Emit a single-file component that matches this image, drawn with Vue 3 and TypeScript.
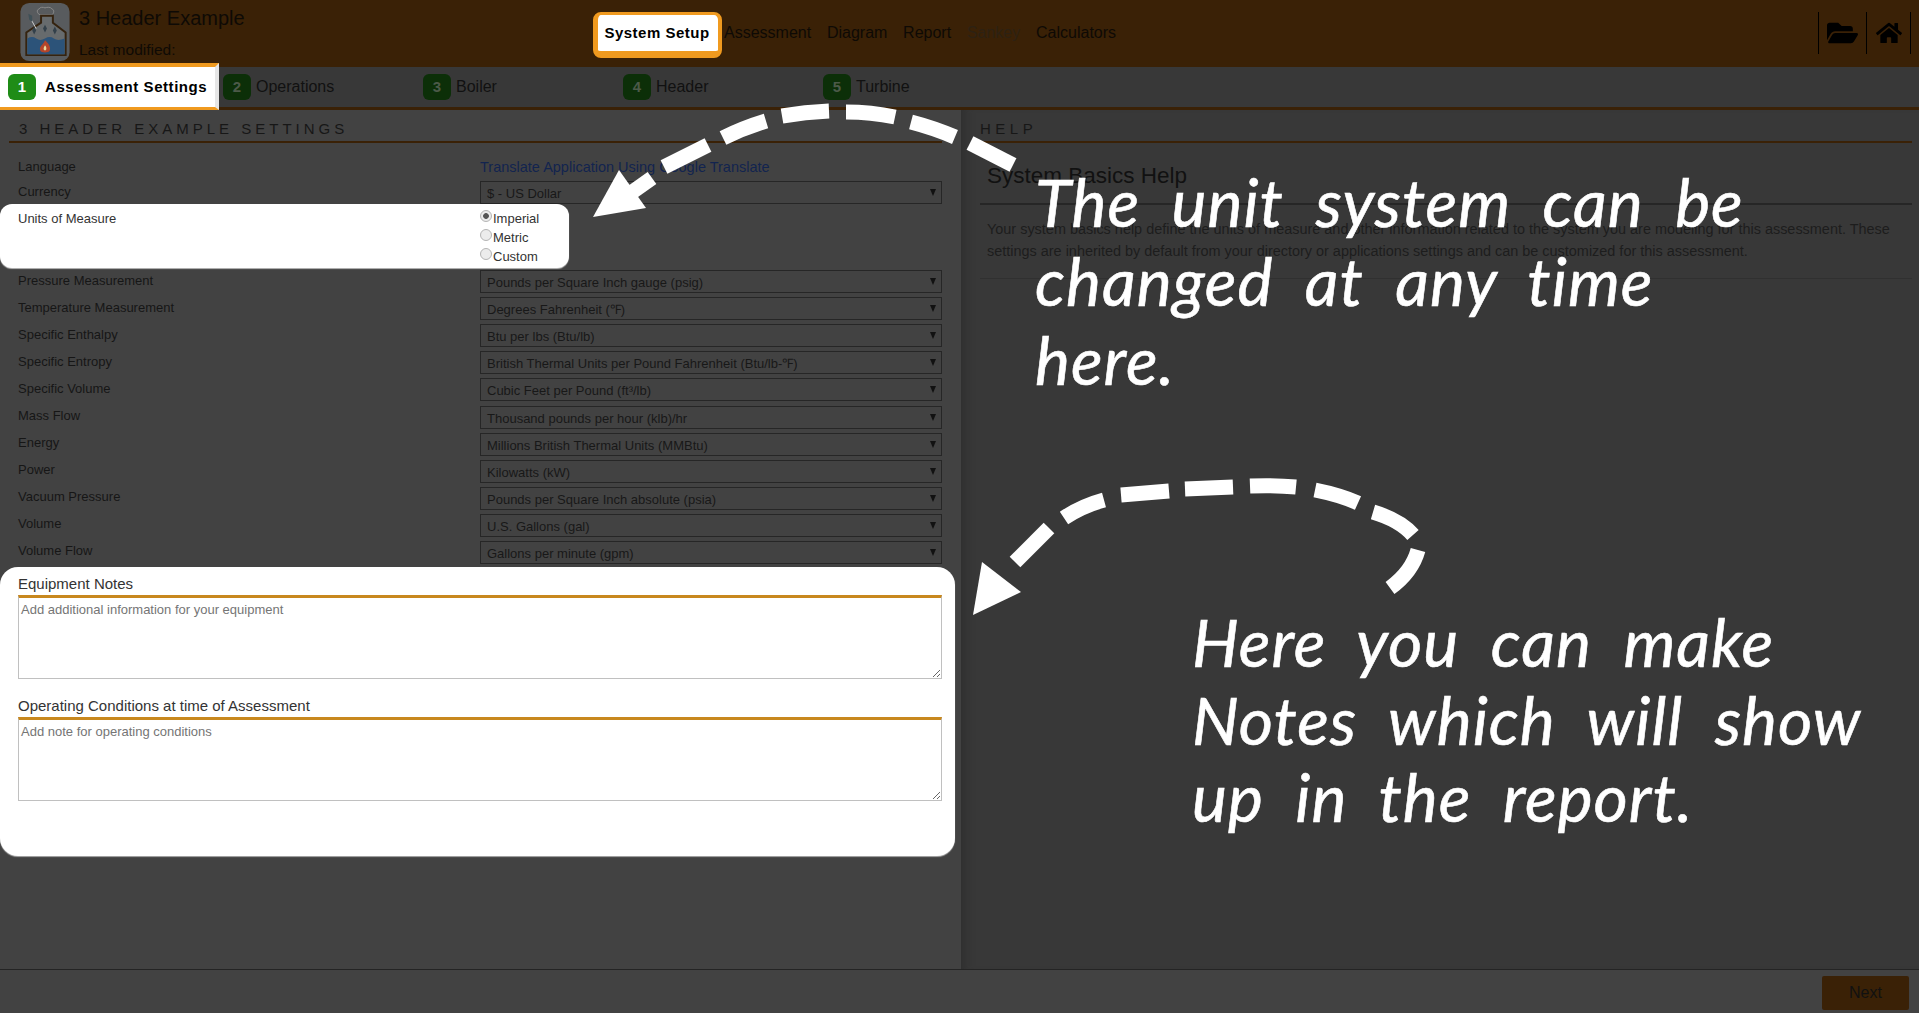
<script setup lang="ts">
interface Row { label: string; value: string }

const navItems = [
  { label: 'Assessment', dim: false },
  { label: 'Diagram', dim: false },
  { label: 'Report', dim: false },
  { label: 'Sankey', dim: true },
  { label: 'Calculators', dim: false }
]
const steps = ['Operations', 'Boiler', 'Header', 'Turbine']
const rows: Row[] = [
  { label: 'Pressure Measurement', value: 'Pounds per Square Inch gauge (psig)' },
  { label: 'Temperature Measurement', value: 'Degrees Fahrenheit (℉)' },
  { label: 'Specific Enthalpy', value: 'Btu per lbs (Btu/lb)' },
  { label: 'Specific Entropy', value: 'British Thermal Units per Pound Fahrenheit (Btu/lb-℉)' },
  { label: 'Specific Volume', value: 'Cubic Feet per Pound (ft³/lb)' },
  { label: 'Mass Flow', value: 'Thousand pounds per hour (klb)/hr' },
  { label: 'Energy', value: 'Millions British Thermal Units (MMBtu)' },
  { label: 'Power', value: 'Kilowatts (kW)' },
  { label: 'Vacuum Pressure', value: 'Pounds per Square Inch absolute (psia)' },
  { label: 'Volume', value: 'U.S. Gallons (gal)' },
  { label: 'Volume Flow', value: 'Gallons per minute (gpm)' }
]
const units = ['Imperial', 'Metric', 'Custom']
const dashes = [
  'M1013 165 L970 143', 'M955 137 Q934 128 911 122', 'M895 117 Q871 112 846 112',
  'M829 111 Q805 112 782 116', 'M766 121 Q743 128 723 138', 'M708 145 L664 167', 'M652 178 L628 195',
  'M1390 588 Q1412 572 1418 550', 'M1413 535 Q1400 520 1373 512', 'M1358 503 Q1340 495 1315 490',
  'M1296 487 Q1275 485 1250 486', 'M1233 487 L1185 489', 'M1169 491 L1121 495',
  'M1104 500 Q1082 506 1064 518', 'M1049 528 L1015 562'
]
</script>

<template>
  <div class="page">
    <header class="topbar">
      <div class="brand">
        <svg class="logo" viewBox="0 0 50 60" aria-hidden="true">
          <rect width="50" height="59" rx="9" fill="#585b5e" />
          <path d="M20 12c-3-1-4-5-1-6 1-2 4-2 6-1 2-1 6-1 7 1 3 1 2 5 0 6z" fill="none" stroke="#8a8a8a" stroke-width="1" />
          <path d="M21 13h12v7l13 10v23H6V30l15-10z" fill="#676b6d" stroke="#35230f" stroke-width="2" />
          <path d="M7 36q5-3 9 0t9 0 9 0 11 0v16H7z" fill="#2c5379" />
          <path d="M25 38c3 3 6 6 5 10-1 3-9 3-10 0-1-4 3-5 5-10z" fill="#b4452a" />
          <path d="M25 43c1 1 2 3 1 5h-2c-1-2 0-3 1-5z" fill="#e8d9a0" />
          <path d="M14 24l2 4-2 4-2-4zM25 22l2 4-2 4-2-4zM35 24l2 4-2 4-2-4z" fill="#33404a" />
          <path d="M11 17l5 9" stroke="#d0d0d0" stroke-width="1" />
          <path d="M8 11l4 2 0 6-3-2z" fill="#3f5057" />
        </svg>
        <div>
          <div class="title">3 Header Example</div>
          <div class="modified">Last modified:</div>
        </div>
      </div>
      <nav class="nav">
        <span class="nav-active">System Setup</span>
        <span v-for="item in navItems" :key="item.label" class="nav-item" :class="{ dim: item.dim }">{{ item.label }}</span>
      </nav>
      <div class="tools">
        <span class="tool">
          <svg class="folder" viewBox="0 0 576 512" aria-hidden="true"><path d="M572.694 292.093L500.27 416.248A63.997 63.997 0 0 1 444.989 448H45.025c-18.523 0-30.064-20.093-20.731-36.093l72.424-124.155A64 64 0 0 1 152 256h399.964c18.523 0 30.064 20.093 20.73 36.093zM152 224h328v-48c0-26.51-21.49-48-48-48H272l-64-64H48C21.49 64 0 85.49 0 112v278.046l69.077-118.418C86.214 242.25 117.989 224 152 224z" /></svg>
        </span>
        <span class="tool home-tool">
          <svg class="home" viewBox="0 0 576 512" aria-hidden="true"><path d="M280.37 148.26L96 300.11V464a16 16 0 0 0 16 16l112.06-.29a16 16 0 0 0 15.92-16V368a16 16 0 0 1 16-16h64a16 16 0 0 1 16 16v95.64a16 16 0 0 0 16 16.05L464 480a16 16 0 0 0 16-16V300L295.67 148.26a12.19 12.19 0 0 0-15.3 0zM571.6 251.47L488 182.56V44.05a12 12 0 0 0-12-12h-56a12 12 0 0 0-12 12v72.61L318.47 43a48 48 0 0 0-61 0L4.34 251.47a12 12 0 0 0-1.6 16.9l25.5 31A12 12 0 0 0 45.15 301l235.22-193.74a12.19 12.19 0 0 1 15.3 0L530.9 301a12 12 0 0 0 16.9-1.6l25.5-31a12 12 0 0 0-1.7-16.93z" /></svg>
        </span>
      </div>
    </header>

    <div class="stepbar">
      <div class="step step-active"><span class="badge">1</span><span class="step-text">Assessment Settings</span></div>
      <div v-for="(step, i) in steps" :key="step" class="step"><span class="badge">{{ i + 2 }}</span><span>{{ step }}</span></div>
    </div>

    <main class="main">
      <section class="left">
        <h2 class="section-title">3 HEADER EXAMPLE SETTINGS</h2>
        <div class="form">
          <div class="row lang-row">
            <label>Language</label>
            <a class="translate">Translate Application Using Google Translate</a>
          </div>
          <div class="row currency-row">
            <label>Currency</label>
            <div class="select">$ - US Dollar</div>
          </div>
          <div class="units">
            <label>Units of Measure</label>
            <div class="radios">
              <label v-for="(u, i) in units" :key="u" class="radio"><input type="radio" name="units" :checked="i === 0" />{{ u }}</label>
            </div>
          </div>
          <div class="rows">
            <div v-for="r in rows" :key="r.label" class="row">
              <label>{{ r.label }}</label>
              <div class="select">{{ r.value }}</div>
            </div>
          </div>
          <div class="notes">
            <label>Equipment Notes</label>
            <textarea placeholder="Add additional information for your equipment"></textarea>
            <label>Operating Conditions at time of Assessment</label>
            <textarea placeholder="Add note for operating conditions"></textarea>
          </div>
        </div>
      </section>
      <section class="right">
        <h2 class="section-title help-title">HELP</h2>
        <div class="help">
          <h3>System Basics Help</h3>
          <p>Your system basics help define the units of measure and other information related to the system you are modeling for this assessment. These settings are inherited by default from your directory or applications settings and can be customized for this assessment.</p>
        </div>
      </section>
    </main>

    <footer class="footer"><button class="next">Next</button></footer>

    <svg class="arrows" viewBox="0 0 1919 1013" aria-hidden="true">
      <path v-for="d in dashes" :key="d" :d="d" fill="none" stroke="#fff" stroke-width="15" />
      <path d="M593 217L619 170 646 208z" fill="#fff" />
      <path d="M973 615L982 562 1021 592z" fill="#fff" />
    </svg>
    <div class="note note-a">
      <div>The unit system can be</div>
      <div>changed at any time</div>
      <div>here.</div>
    </div>
    <div class="note note-b">
      <div>Here you can make</div>
      <div>Notes which will show</div>
      <div>up in the report.</div>
    </div>
  </div>
</template>

<style>
html, body { margin: 0; overflow: hidden; background: #424242; }
</style>

<style scoped>
.page {
  position: relative;
  width: 1919px;
  height: 1013px;
  display: flex;
  flex-direction: column;
  overflow: hidden;
  font-family: "Liberation Sans", Arial, sans-serif;
  color: #141414;
  background: #424242;
}
.topbar {
  height: 67px;
  flex: none;
  display: flex;
  background: #3a2106;
}
.brand { width: 593px; flex: none; display: flex; padding: 3px 0 0 20px; box-sizing: border-box; gap: 9px; }
.logo { width: 50px; height: 59px; flex: none; }
.title { font-size: 20px; line-height: 24px; margin-top: 3px; color: #0e0a05; }
.modified { font-size: 15.5px; line-height: 20px; margin-top: 10px; color: #0e0a05; }
.nav { display: flex; align-items: flex-start; padding-top: 12px; }
.nav-active {
  width: 120px;
  height: 36px;
  box-sizing: content-box;
  line-height: 35px;
  padding-right: 0;
  text-indent: -2px;
  text-align: center;
  background: #fff;
  color: #000;
  font-size: 15px;
  font-weight: 700;
  letter-spacing: .5px;
  border: solid #f09a1f;
  border-width: 3px 4px 7px 5px;
  border-radius: 8px;
  margin-right: 2px;
}
.nav-item { font-size: 16px; line-height: 42px; margin-right: 15.75px; color: #0e0a05; }
.nav-item.dim { color: #2d2113; }
.tools { margin-left: auto; display: flex; align-items: flex-start; padding: 12px 8px 0 0; }
.tool { width: 48px; height: 42px; box-sizing: border-box; border-left: 1px solid #000; display: flex; align-items: center; justify-content: center; }
.home-tool { width: 45px; border-right: 1px solid #000; }
.folder { width: 31px; height: 28px; fill: #000; }
.home { width: 26px; height: 24px; fill: #000; }

.stepbar {
  height: 43px;
  flex: none;
  display: flex;
  box-sizing: border-box;
  border-bottom: 3px solid #3a2106;
  background: #383838;
  font-size: 16px;
  color: #111;
}
.step { width: 200px; flex: none; display: flex; align-items: center; gap: 5px; }
.badge {
  width: 28px;
  height: 26px;
  flex: none;
  border-radius: 6px;
  background: #0c2f08;
  color: #4c5a49;
  font-weight: 700;
  font-size: 15px;
  line-height: 26px;
  text-align: center;
}
.step-active {
  width: 219px;
  height: 47px;
  margin: -4px 4px 0 0;
  padding-left: 8px;
  box-sizing: border-box;
  background: #fff;
  border-top: 4px solid #f09a1f;
  border-bottom: 3px solid #f09a1f;
  border-right: 4px solid #e6e6e6;
  color: #000;
  gap: 9px;
  position: relative;
}
.step-active .badge { background: #1f8c17; color: #fff; }
.step-text { font-weight: 700; font-size: 15px; line-height: 17px; margin-top: -2px; letter-spacing: .55px; white-space: nowrap; }

.main { flex: 1; display: flex; min-height: 0; }
.left { width: 961px; flex: none; box-sizing: border-box; background: #424242; padding: 0 19px 0 9px; }
.right {
  flex: 1;
  background: #383838;
  box-shadow: inset 12px 0 10px -8px #2f2f2f;
  padding: 0 7px 0 19px;
}
.section-title {
  margin: 0;
  height: 33px;
  box-sizing: border-box;
  padding: 10px 0 0 10px;
  font-size: 15px;
  line-height: 17px;
  font-weight: 400;
  letter-spacing: 4px;
  color: #171717;
  border-bottom: 2px solid #3a2106;
}
.help-title { padding-left: 0; letter-spacing: 4.5px; }
.form { font-size: 13px; color: #161616; }
.row { display: flex; height: 27.1px; align-items: center; }
.row > label { width: 471px; padding-left: 9px; box-sizing: border-box; flex: none; position: relative; top: -1.5px; }
.lang-row { margin-top: 11px; height: 25px; }
.lang-row > label { top: 0; }
.currency-row > label { top: -1px; }
.translate { color: #12244f; font-size: 14.5px; }
.currency-row { height: 26px; }
.select {
  flex: 1;
  height: 23px;
  box-sizing: border-box;
  border: 1px solid #262626;
  line-height: 23px;
  padding-left: 6px;
  position: relative;
  color: #181818;
  white-space: nowrap;
}
.select::after {
  content: "";
  position: absolute;
  right: 5px;
  top: 7px;
  border-left: 3.5px solid transparent;
  border-right: 3.5px solid transparent;
  border-top: 7px solid #111;
}
.units {
  display: flex;
  height: 64px;
  margin: -1px 0 1px -9px;
  padding: 0 0 0 18px;
  width: 569px;
  box-sizing: border-box;
  background: #fff;
  border-radius: 12px;
  box-shadow: 0 1px 1px #bbb;
  color: #333;
  position: relative;
}
.units > label { width: 462px; flex: none; padding-top: 7px; line-height: 15px; }
.radios { display: flex; flex-direction: column; padding-top: 5px; }
.radio { display: flex; height: 19px; align-items: flex-start; line-height: 19px; white-space: nowrap; }
.radio input {
  appearance: none;
  width: 12px;
  height: 12px;
  margin: 1px 1px 0 0;
  border-radius: 50%;
  border: 1px solid #b4b4b4;
  background: #ececec;
  box-sizing: border-box;
  flex: none;
}
.radio input:checked { background: radial-gradient(circle, #555 0 2.5px, #ececec 3.2px); }
.rows { margin-top: -1px; }
.notes {
  margin: 0 0 0 -9px;
  width: 955px;
  height: 289px;
  box-sizing: border-box;
  padding: 8px 13px 0 18px;
  background: #fff;
  border-radius: 18px;
  box-shadow: 0 1px 1px #aaa;
  position: relative;
  top: 1px;
  display: flex;
  flex-direction: column;
}
.notes label { font-size: 15px; line-height: 18px; color: #333; height: 20px; }
.notes textarea {
  display: block;
  flex: none;
  width: 924px;
  height: 84px;
  margin: 0 0 18px;
  box-sizing: border-box;
  border: 1px solid #c0c0c0;
  border-top: 3px solid #c8881e;
  background: #fff;
  padding: 4px 2px;
  font: 13px "Liberation Sans", Arial, sans-serif;
  outline: none;
  border-radius: 0;
}
.notes textarea::placeholder { color: #757575; opacity: 1; }
.help h3 {
  margin: 0;
  padding: 19px 0 0 7px;
  height: 62px;
  box-sizing: border-box;
  font-size: 22.5px;
  line-height: 27px;
  font-weight: 400;
  color: #111;
  border-bottom: 2px solid #262626;
}
.help p {
  margin: 0;
  padding: 14px 0 16px 7px;
  font-size: 14.45px;
  line-height: 21.5px;
  color: #1d1d1d;
  border-bottom: 1px solid #303030;
}
.footer {
  height: 44px;
  flex: none;
  box-sizing: border-box;
  border-top: 1px solid #242424;
  background: #424242;
  display: flex;
  justify-content: flex-end;
  padding: 6px 10px 0 0;
}
.next {
  width: 87px;
  height: 34px;
  border: 0;
  border-radius: 2px;
  background: #3a2106;
  color: #111;
  font: 16px "Liberation Sans", Arial, sans-serif;
  padding: 0;
}
.arrows { position: absolute; inset: 0; width: 1919px; height: 1013px; pointer-events: none; }
.note {
  position: absolute;
  font-family: Lato, "Liberation Sans", sans-serif;
  font-style: italic;
  font-size: 66px;
  color: #fff;
  letter-spacing: 1px;
  word-spacing: 15px;
  white-space: nowrap;
  -webkit-text-stroke: .6px #fff;
}
.note-a { left: 1035px; top: 162px; line-height: 79px; }
.note-b { left: 1192px; top: 603px; line-height: 77.5px; }
</style>
